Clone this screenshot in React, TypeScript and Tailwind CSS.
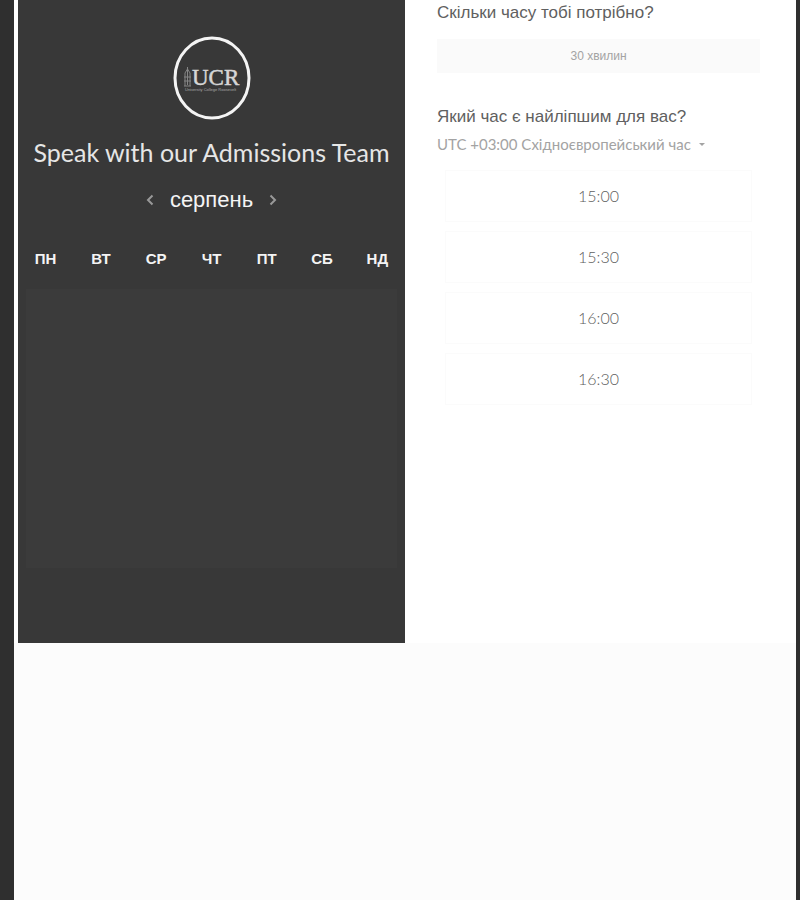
import { useState } from "react";

const weekdays = ["ПН", "ВТ", "СР", "ЧТ", "ПТ", "СБ", "НД"];
const times = ["15:00", "15:30", "16:00", "16:30"];

function Logo() {
  return (
    <svg viewBox="0 0 78 84" className="h-[84px] w-[78px]" role="img" aria-label="UCR">
      <ellipse cx="39" cy="42" rx="37" ry="40" fill="none" stroke="#f4f4f4" strokeWidth="3" />
      <g fill="none" stroke="#858585" strokeWidth="1">
        <path d="M14.500 31v18M12 37v13M17 37v13M11 41h7M11 45h7M11 50h7M12 37l2.500-4 2.500 4" />
      </g>
      <text x="19" y="49" fontSize="23" fill="#d6d6d6" stroke="#d6d6d6" strokeWidth="0.5" className="font-['Liberation_Serif',serif]">
        UCR
      </text>
      <text x="12" y="55" fontSize="4" fill="#a8a8a8" className="font-['Liberation_Sans',sans-serif]">
        University College Roosevelt
      </text>
    </svg>
  );
}

function Chevron({ direction, onClick }: { direction: "left" | "right"; onClick: () => void }) {
  return (
    <button
      type="button"
      onClick={onClick}
      aria-label={direction === "left" ? "Попередній місяць" : "Наступний місяць"}
      className="flex h-6 w-4 items-center justify-center text-[#999999]"
    >
      <svg viewBox="0 0 8 12" className="h-3 w-2" fill="none" stroke="currentColor" strokeWidth="2">
        <path d={direction === "left" ? "M6.500 1.500 2 6l4.500 4.500" : "M1.500 1.500 6 6l-4.500 4.500"} />
      </svg>
    </button>
  );
}

export default function App() {
  const [selected, setSelected] = useState("");
  return (
    <div className="min-h-screen border-r-4 border-l-[14px] border-[#2f2f2f] bg-[#fcfcfc] font-['Liberation_Sans',Arial,sans-serif]">
      <main className="grid min-h-[643px] grid-cols-[387fr_391fr] bg-white pl-1">
        <section className="bg-[#383838] pt-9 pb-[75px] text-[#f4f4f4]">
          <div className="flex justify-center">
            <Logo />
          </div>
          <h1 className="mt-4 text-center font-['Lato',sans-serif] text-[25px] leading-8 whitespace-nowrap text-[#e6e6e6]">
            Speak with our Admissions Team
          </h1>
          <div className="mt-4 flex items-center justify-center gap-3">
            <Chevron direction="left" onClick={() => setSelected("")} />
            <h2 className="text-[22px] leading-8">серпень</h2>
            <Chevron direction="right" onClick={() => setSelected("")} />
          </div>
          <div className="mt-8 grid grid-cols-7 text-center text-[15px] leading-[22px] font-bold">
            {weekdays.map((day) => (
              <span key={day}>{day}</span>
            ))}
          </div>
          <div className="mx-2 mt-[19px] h-[279px] bg-[#3b3b3b]" />
        </section>

        <section className="pr-9 pl-8">
          <h2 className="pt-[3px] text-[17px] leading-5 text-[#606060]">Скільки часу тобі потрібно?</h2>
          <button type="button" className="mt-4 block h-[34px] w-full bg-[#fafafa] text-xs text-[#a3a3a3]">
            30 хвилин
          </button>
          <h2 className="mt-[34px] text-[17px] leading-5 text-[#606060]">
            <label htmlFor="zone">Який час є найліпшим для вас?</label>
          </h2>
          <div className="mt-[7px] flex items-center gap-2 text-[#a3a3a3]">
            <select
              id="zone"
              className="appearance-none bg-transparent font-['Lato','Liberation_Sans',sans-serif] text-[15px] leading-5 [field-sizing:content]"
            >
              <option>UTC +03:00 Східноєвропейський час</option>
            </select>
            <svg viewBox="0 0 6 3" className="h-[3px] w-1.5" fill="currentColor" aria-hidden="true">
              <path d="M0 0h6L3 3z" />
            </svg>
          </div>
          <div className="mt-4 flex flex-col gap-[9px] px-2">
            {times.map((time) => (
              <button
                key={time}
                type="button"
                aria-pressed={selected === time}
                onClick={() => setSelected(time)}
                className="h-[52px] border border-[#fbfbfb] bg-white font-['Lato',sans-serif] text-base font-light text-[#606060]"
              >
                {time}
              </button>
            ))}
          </div>
        </section>
      </main>
    </div>
  );
}
